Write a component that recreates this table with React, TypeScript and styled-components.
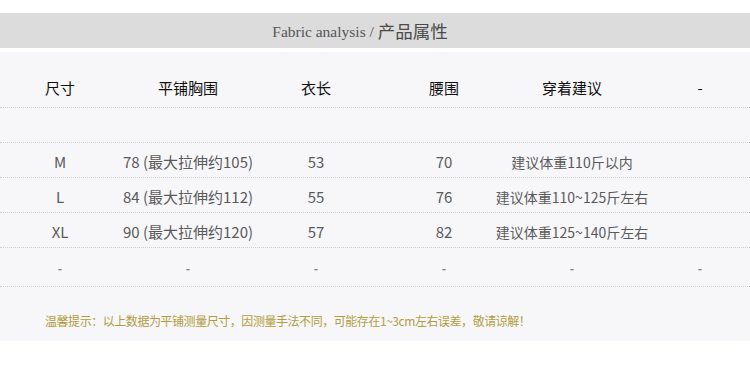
import React from 'react';
import styled, { createGlobalStyle } from 'styled-components';

const GlobalStyle = createGlobalStyle`
	html, body {
		margin: 0;
		padding: 0;
		background: #ffffff;
		overflow: hidden;
	}
	body {
		font-family: "Noto Sans CJK SC", "Noto Sans", sans-serif;
	}
`;

type SizeRow = {
	size: string;
	chest: string;
	length: string;
	waist: string;
	advice: string;
	extra: string;
};

const rows: SizeRow[] = [
	{ size: 'M', chest: '78 (最大拉伸约105)', length: '53', waist: '70', advice: '建议体重110斤以内', extra: '' },
	{ size: 'L', chest: '84 (最大拉伸约112)', length: '55', waist: '76', advice: '建议体重110~125斤左右', extra: '' },
	{ size: 'XL', chest: '90 (最大拉伸约120)', length: '57', waist: '82', advice: '建议体重125~140斤左右', extra: '' },
	{ size: '-', chest: '-', length: '-', waist: '-', advice: '-', extra: '-' },
];

const headers = ['尺寸', '平铺胸围', '衣长', '腰围', '穿着建议', '-'];

const App = () => {
	return (
		<Page>
			<GlobalStyle />
			<TitleBar>
				<TitleLatin>Fabric analysis / </TitleLatin>
				<TitleCn>产品属性</TitleCn>
			</TitleBar>
			<Panel>
				<HeadRow>
					{headers.map((h, i) => (
						<HeadCell key={i}>{h}</HeadCell>
					))}
				</HeadRow>
				<SpacerRow />
				{rows.map((r, i) => {
					const dash = r.size === '-';
					return (
						<DataRow key={i} $tall={dash}>
							<Cell $dash={dash}>{r.size}</Cell>
							<Cell $dash={dash}>{r.chest}</Cell>
							<Cell $dash={dash}>{r.length}</Cell>
							<Cell $dash={dash}>{r.waist}</Cell>
							<Cell $dash={dash} $small>{r.advice}</Cell>
							<Cell $dash={dash}>{r.extra}</Cell>
						</DataRow>
					);
				})}
				<Notice>温馨提示：以上数据为平铺测量尺寸，因测量手法不同，可能存在1~3cm左右误差，敬请谅解！</Notice>
			</Panel>
		</Page>
	);
};

export default App;

const Page = styled.div`
	width: 750px;
	height: 381px;
	padding-top: 13px;
	box-sizing: border-box;
	background: #ffffff;
`;

const TitleBar = styled.div`
	height: 35px;
	background-color: #dcdcdc;
	display: flex;
	align-items: center;
	justify-content: center;
	padding-right: 30px;
	box-sizing: border-box;
	color: #555555;
`;

const TitleLatin = styled.span`
	font-family: "Liberation Serif", serif;
	font-size: 15.5px;
	white-space: pre;
	padding-top: 2px;
`;

const TitleCn = styled.span`
	font-family: "Noto Sans CJK SC", sans-serif;
	font-size: 17.5px;
	color: #4a4a4a;
`;

const Panel = styled.div`
	margin-top: 4px;
	height: 289px;
	background-color: #f7f7fa;
	display: flex;
	flex-direction: column;
`;

const rowGrid = `
	display: grid;
	grid-template-columns: repeat(6, 120px);
	column-gap: 8px;
	align-items: center;
	justify-items: center;
	border-bottom: 1px dotted #cfcfd3;
	box-sizing: border-box;
`;

const HeadRow = styled.div`
	${rowGrid};
	height: 56px;
	padding-top: 17px;
`;

const HeadCell = styled.div`
	font-size: 15px;
	line-height: 20px;
	color: #111111;
	white-space: nowrap;
`;

const SpacerRow = styled.div`
	height: 35px;
	border-bottom: 1px dotted #cfcfd3;
	box-sizing: border-box;
`;

const DataRow = styled.div<{ $tall?: boolean }>`
	${rowGrid};
	height: ${(p) => (p.$tall ? '39px' : '35px')};
	padding-top: ${(p) => (p.$tall ? '2px' : '3px')};
`;

const Cell = styled.div<{ $small?: boolean; $dash?: boolean }>`
	font-size: ${(p) => (p.$dash ? '12px' : p.$small ? '14px' : '15px')};
	line-height: 20px;
	color: ${(p) => (p.$dash ? '#7e7e84' : '#5a5a5a')};
	font-weight: ${(p) => (p.$dash ? 700 : 400)};
	white-space: nowrap;
`;

const Notice = styled.div`
	padding: 26px 0 0 45px;
	font-size: 12px;
	line-height: 16px;
	letter-spacing: -0.45px;
	color: #b39c3c;
	white-space: nowrap;
`;
